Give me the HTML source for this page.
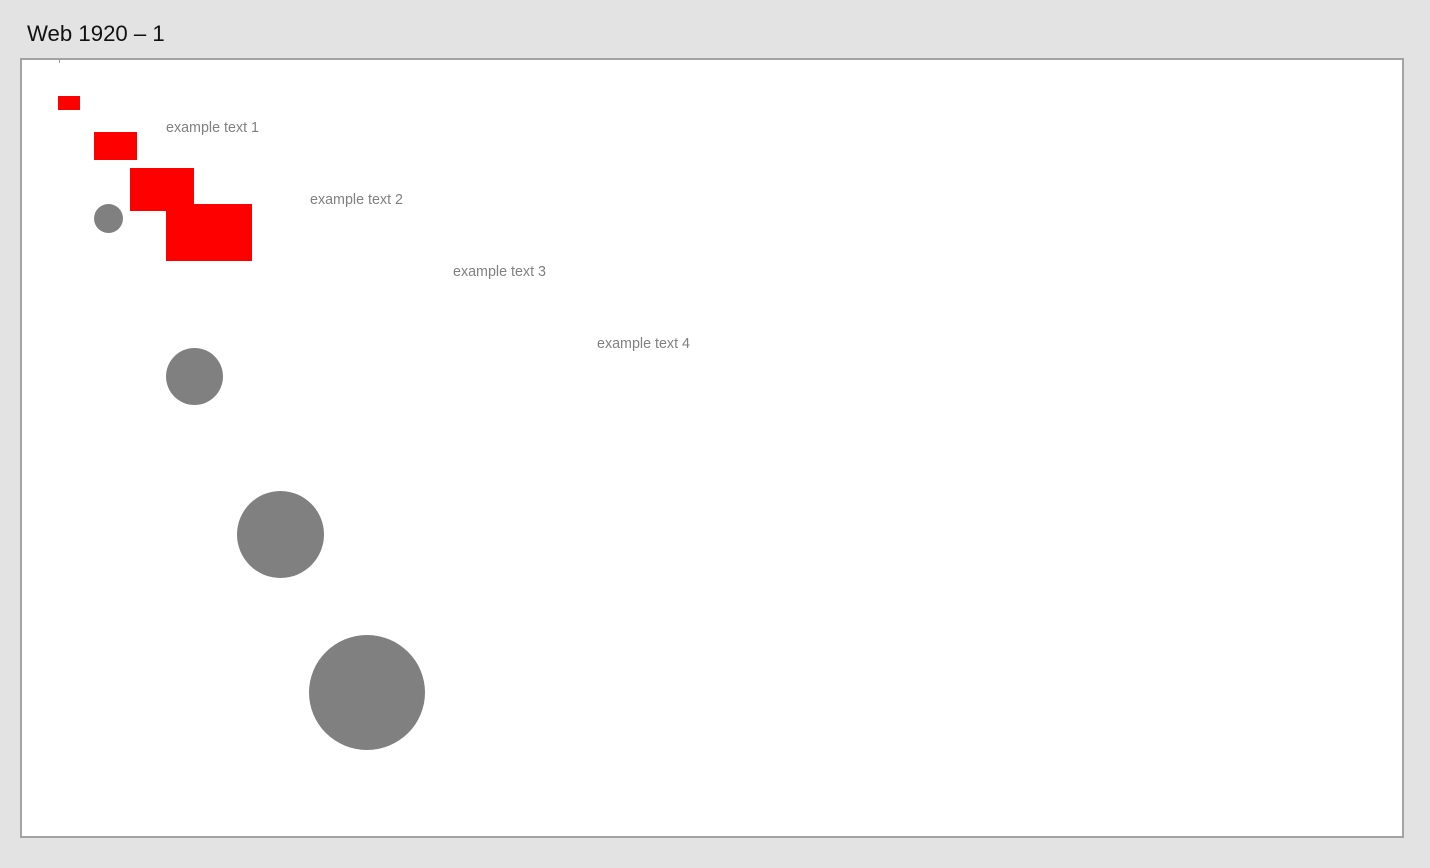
<!DOCTYPE html>
<html><head><style>
html,body{margin:0;padding:0;width:1430px;height:868px;background:#e3e3e3;overflow:hidden;font-family:"Liberation Sans",sans-serif;position:relative}
.a{position:absolute}
.frame{left:20px;top:58px;width:1380px;height:776px;border:2px solid #a3a3a3;background:#fff}
.r{background:#ff0000;position:absolute}
.c{background:#808080;border-radius:50%;position:absolute}
.t{position:absolute;color:#808080;font-size:14.3px;line-height:16px;white-space:nowrap}
</style></head><body>
<div class="a" style="left:27px;top:21px;font-size:22.2px;color:#111;line-height:26px">Web 1920 – 1</div>
<div class="a frame"></div>
<div class="a" style="left:59px;top:60px;width:1px;height:3px;background:#999"></div>
<div class="r" style="left:58px;top:96px;width:22px;height:14px"></div>
<div class="r" style="left:94px;top:132px;width:43px;height:28px"></div>
<div class="r" style="left:130px;top:168px;width:64px;height:43px"></div>
<div class="r" style="left:166px;top:204px;width:86px;height:57px"></div>
<div class="c" style="left:94px;top:204px;width:29px;height:29px"></div>
<div class="c" style="left:166px;top:348px;width:57px;height:57px"></div>
<div class="c" style="left:237px;top:491px;width:87px;height:87px"></div>
<div class="c" style="left:309px;top:635px;width:116px;height:115px"></div>
<div class="t" style="left:166px;top:120px">example text 1</div>
<div class="t" style="left:310px;top:192px">example text 2</div>
<div class="t" style="left:453px;top:264px">example text 3</div>
<div class="t" style="left:597px;top:336px">example text 4</div>
</body></html>
